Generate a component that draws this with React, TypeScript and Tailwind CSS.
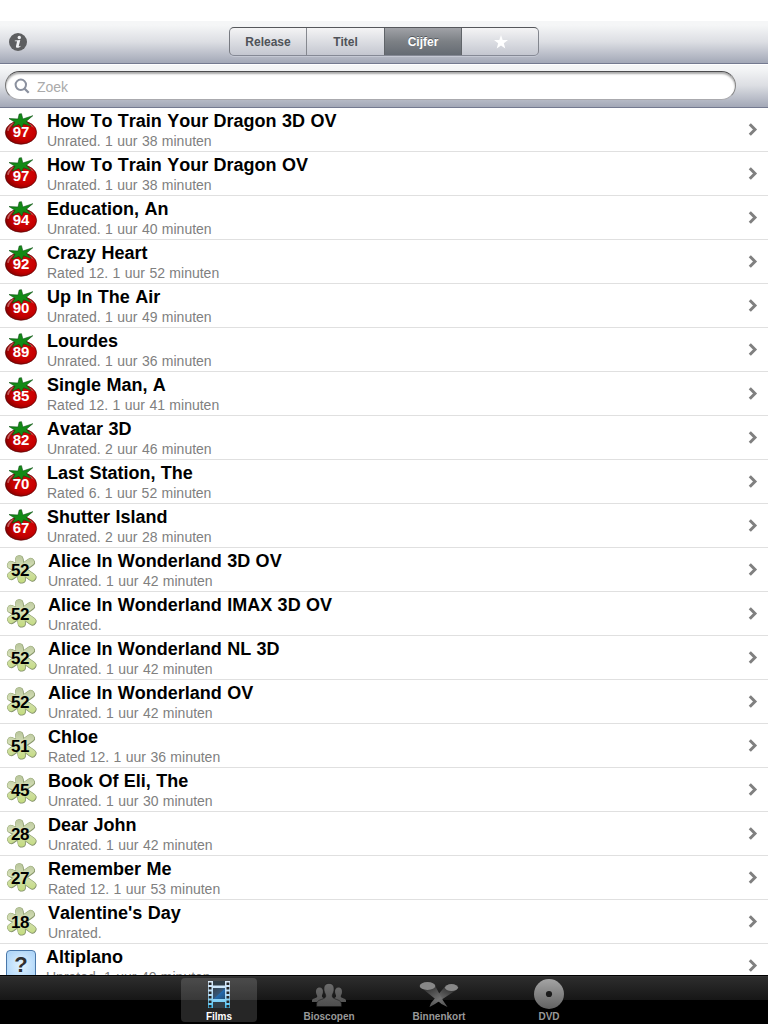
import React from "react";

type Kind = "fresh" | "rotten" | "unknown";
type Movie = { score: string; title: string; info: string; kind: Kind };

const m = (score: string, title: string, info: string, kind: Kind): Movie => ({ score, title, info, kind });

const movies: Movie[] = [
  m("97", "How To Train Your Dragon 3D OV", "Unrated. 1 uur 38 minuten", "fresh"),
  m("97", "How To Train Your Dragon OV", "Unrated. 1 uur 38 minuten", "fresh"),
  m("94", "Education, An", "Unrated. 1 uur 40 minuten", "fresh"),
  m("92", "Crazy Heart", "Rated 12. 1 uur 52 minuten", "fresh"),
  m("90", "Up In The Air", "Unrated. 1 uur 49 minuten", "fresh"),
  m("89", "Lourdes", "Unrated. 1 uur 36 minuten", "fresh"),
  m("85", "Single Man, A", "Rated 12. 1 uur 41 minuten", "fresh"),
  m("82", "Avatar 3D", "Unrated. 2 uur 46 minuten", "fresh"),
  m("70", "Last Station, The", "Rated 6. 1 uur 52 minuten", "fresh"),
  m("67", "Shutter Island", "Unrated. 2 uur 28 minuten", "fresh"),
  m("52", "Alice In Wonderland 3D OV", "Unrated. 1 uur 42 minuten", "rotten"),
  m("52", "Alice In Wonderland IMAX 3D OV", "Unrated.", "rotten"),
  m("52", "Alice In Wonderland NL 3D", "Unrated. 1 uur 42 minuten", "rotten"),
  m("52", "Alice In Wonderland OV", "Unrated. 1 uur 42 minuten", "rotten"),
  m("51", "Chloe", "Rated 12. 1 uur 36 minuten", "rotten"),
  m("45", "Book Of Eli, The", "Unrated. 1 uur 30 minuten", "rotten"),
  m("28", "Dear John", "Unrated. 1 uur 42 minuten", "rotten"),
  m("27", "Remember Me", "Rated 12. 1 uur 53 minuten", "rotten"),
  m("18", "Valentine's Day", "Unrated.", "rotten"),
  m("?", "Altiplano", "Unrated. 1 uur 40 minuten", "unknown"),
];

function Gradients() {
  return (
    <svg className="absolute h-0 w-0" aria-hidden="true">
      <defs>
        <radialGradient id="tomato" cx="0.6" cy="0.45" r="0.65">
          <stop offset="0" stopColor="#dc0808" />
          <stop offset="0.6" stopColor="#c40000" />
          <stop offset="1" stopColor="#7a0000" />
        </radialGradient>
        <linearGradient id="splat" gradientUnits="userSpaceOnUse" x1="0" y1="3" x2="0" y2="31">
          <stop offset="0" stopColor="#b7c49a" />
          <stop offset="0.45" stopColor="#d6e0b8" />
          <stop offset="1" stopColor="#c3dc7c" />
        </linearGradient>
        <linearGradient id="film" x1="0" y1="0" x2="0" y2="1">
          <stop offset="0" stopColor="#dcebfa" />
          <stop offset="0.5" stopColor="#b4dcf6" />
          <stop offset="1" stopColor="#45c0f2" />
        </linearGradient>
        <linearGradient id="frame" x1="0" y1="0" x2="1" y2="1">
          <stop offset="0" stopColor="#36424f" />
          <stop offset="0.5" stopColor="#365777" />
          <stop offset="0.55" stopColor="#226aae" />
          <stop offset="1" stopColor="#234e76" />
        </linearGradient>
        <linearGradient id="grey" gradientUnits="userSpaceOnUse" x1="0" y1="0" x2="0" y2="24">
          <stop offset="0" stopColor="#6c6c6c" />
          <stop offset="1" stopColor="#4d4d4d" />
        </linearGradient>
        <linearGradient id="disc" x1="0" y1="0" x2="0" y2="1">
          <stop offset="0" stopColor="#a4a4a4" />
          <stop offset="1" stopColor="#626262" />
        </linearGradient>
        <linearGradient id="beamLeft" x1="0" y1="0" x2="0.7" y2="1">
          <stop offset="0.1" stopColor="#2b2b2b" />
          <stop offset="0.75" stopColor="#707070" />
          <stop offset="1" stopColor="#5a5a5a" />
        </linearGradient>
        <linearGradient id="beamRight" x1="1" y1="0" x2="0.3" y2="1">
          <stop offset="0.1" stopColor="#2b2b2b" />
          <stop offset="0.75" stopColor="#707070" />
          <stop offset="1" stopColor="#5a5a5a" />
        </linearGradient>
      </defs>
    </svg>
  );
}

function Tomato() {
  return (
    <svg className="h-full w-full" viewBox="0 0 34 34">
      <ellipse cx="17" cy="20.500" rx="15.600" ry="11.700" fill="url(#tomato)" stroke="#5a0505" strokeWidth="0.7" />
      <path d="M3 18.500c.8-4 3.500-7 7.500-8-3 2.500-5 5-5.700 8.500z" fill="#fff" opacity="0.35" />
      <path d="M24 11.500c3 .5 5 2 6 4.500-2-1.500-4-2.300-6.500-2.500z" fill="#fff" opacity="0.25" />
      <path d="M15.200 2l2.300-.3L18.800 7 28.800 3.700 22.300 9.300 27 14.300 19.500 11.800 17.800 16 15 12.300 8 15.200 11 10.300 5 6.500 14 7z" fill="#138a16" stroke="#0a5010" strokeWidth="0.6" strokeLinejoin="round" />
    </svg>
  );
}

function Splat() {
  const petals = (
    <>
      <path d="M16.500 17L15.200 7.300M16.500 17L7 13M16.500 17L7.200 23.500M16.500 17L17.500 27" strokeWidth="1em" />
      <path d="M16.500 17L26.500 10M16.500 17L28 25" strokeWidth="1em" />
    </>
  );
  return (
    <svg className="h-full w-full" viewBox="0 0 34 34" fill="none" strokeLinecap="round">
      <g stroke="#7f8c66" fontSize="8" transform="translate(0.4 0.5)">{petals}</g>
      <g stroke="#9aab78" fontSize="8">{petals}</g>
      <g stroke="url(#splat)" fontSize="7">{petals}</g>
    </svg>
  );
}

function Badge({ movie }: { movie: Movie }) {
  if (movie.kind === "unknown") {
    return (
      <div className="ml-[6px] mt-[6px] flex h-[30px] w-[30px] shrink-0 items-center justify-center rounded-[4px] border border-[#4a77aa] bg-radial from-[#e2f3ff] to-[#a7d1f8] text-[22px] font-bold leading-[30px] text-[#303030] shadow-[inset_0_0_0_1px_#b6daf7]">
        {movie.score}
      </div>
    );
  }
  const fresh = movie.kind === "fresh";
  return (
    <div className="relative ml-[4px] mt-[4px] h-[34px] w-[34px] shrink-0">
      {fresh ? <Tomato /> : <Splat />}
      <span
        className={
          fresh
            ? "absolute inset-x-0 top-[10px] text-center text-[15px] font-bold leading-[20px] text-white"
            : "absolute -left-[1px] top-[8px] w-[34px] text-center text-[17px] font-bold leading-[22px] tracking-[-0.4px] text-black"
        }
      >
        {movie.score}
      </span>
    </div>
  );
}

function Row({ movie }: { movie: Movie }) {
  const indent = movie.kind === "fresh" ? "pl-[9px]" : "pl-[10px]";
  return (
    <li className="flex h-[44px] shrink-0 border-b border-[#e0e0e0]">
      <Badge movie={movie} />
      <div className={`flex min-w-0 flex-1 flex-col [font-kerning:none] ${indent}`}>
        <span className="mt-[2px] h-[22px] whitespace-nowrap text-[18px] font-bold leading-[22px] text-black [word-spacing:0.4px]">{movie.title}</span>
        <span className="h-[18px] whitespace-nowrap text-[14px] leading-[18px] text-[#808080] [word-spacing:0.5px]">{movie.info}</span>
      </div>
      <svg className="mr-[10px] mt-[15px] h-[13px] w-[10px] shrink-0" viewBox="0 0 10 13">
        <path d="M1.800 1.200l5.200 5.300L1.800 11.800" fill="none" stroke="#808080" strokeWidth="3" />
      </svg>
    </li>
  );
}

function FilmIcon() {
  const holes = [1.5, 6, 10.5, 15, 19.5, 24];
  return (
    <svg className="mt-[1px] h-[27px] w-[24px]" viewBox="0 0 24 27">
      <path d="M1 0h22v27H1z" fill="url(#film)" />
      <path d="M6 0h12v4.500H6zM6 21h12v6H6z" fill="#303d46" />
      <path d="M6 7h12v11H6z" fill="url(#frame)" />
      {holes.map((y) => (
        <path key={y} d={`M1.700 ${y}h2.800v2.400H1.700zM19.500 ${y}h2.800v2.400h-2.800z`} fill="#252525" />
      ))}
    </svg>
  );
}

function PeopleIcon() {
  return (
    <svg className="mt-[2px] h-[24px] w-[36px]" viewBox="0 0 36 24" fill="url(#grey)">
      <path d="M8.500 4.500c2.500 0 3.900 2 3.400 5-.2 1.500-1 2.500-1 3.500 0 2 3 2 4 3V19H1v-1.500c0-2.300 4.500-2 5.300-4 .1-1-1-2-1.200-3.500-.5-3.400.9-5.500 3.400-5.500z" />
      <path d="M27.500 4.500c-2.500 0-3.900 2-3.400 5 .2 1.500 1 2.500 1 3.500 0 2-3 2-4 3V19H35v-1.500c0-2.300-4.500-2-5.300-4-.1-1 1-2 1.200-3.500.5-3.400-.9-5.500-3.400-5.500z" />
      <path d="M18 .4c4 0 5.600 3 4.900 7.400-.3 2-1.700 3.500-1.700 5.200 0 3.700 8.700 3 9.200 7.500V23.500H5.600V20.500c.5-4.500 9.200-3.800 9.200-7.500 0-1.700-1.400-3.200-1.700-5.200-.7-4.400.9-7.400 4.900-7.400z" stroke="#191919" strokeWidth="0.6" />
    </svg>
  );
}

function SpotlightIcon() {
  return (
    <svg className="mt-[2px] h-[28px] w-[40px]" viewBox="0 0 40 28">
      <path d="M38 8.500L26 5.500 12 22l-1.500 4 5.500-3z" fill="url(#beamRight)" />
      <path d="M2 6.500L16 4.500l8 15 4.500 6.500-6-3z" fill="url(#beamLeft)" />
      <ellipse cx="8.500" cy="5" rx="7.800" ry="3.900" fill="#888" />
      <ellipse cx="32.500" cy="6.600" rx="6.600" ry="3.500" fill="#888" />
    </svg>
  );
}

function DiscIcon() {
  return (
    <svg className="h-[30px] w-[30px]" viewBox="0 0 30 30">
      <circle cx="15" cy="15" r="15" fill="url(#disc)" />
      <circle cx="15" cy="15" r="3.100" fill="#1b1b1b" />
    </svg>
  );
}

function Tab({ label, active, children }: { label: string; active?: boolean; children: React.ReactNode }) {
  return (
    <div className={active ? "flex h-[44px] w-[76px] flex-col items-center rounded-[4px] bg-white/15" : "flex h-[44px] w-[76px] flex-col items-center"}>
      <div className="flex h-[32px] shrink-0 items-center justify-center">{children}</div>
      <span className={active ? "mt-[1px] shrink-0 text-[10px] font-bold leading-[12px] text-white" : "mt-[1px] shrink-0 text-[10px] font-bold leading-[12px] text-[#999]"}>{label}</span>
    </div>
  );
}

export default function App() {
  return (
    <div className="flex h-[1024px] w-[768px] flex-col overflow-hidden bg-white font-['Liberation_Sans',Arial,sans-serif]">
      <Gradients />
      <div className="h-[21px] shrink-0" />
      <header className="flex h-[43px] shrink-0 items-start border-b border-[#747a90] bg-linear-to-b from-[#f5f6f7] from-10% via-[#dcdee3] via-50% to-[#a3a8b7]">
        <svg className="ml-[9px] mt-[12px] h-[18px] w-[18px]" viewBox="0 0 18 18">
          <circle cx="9" cy="9" r="9" fill="#5d5e60" />
          <circle cx="10.300" cy="4.500" r="1.700" fill="#f0f1f3" />
          <path d="M5.800 7.400l5.500-.5-1.500 5.800c-.2.900.6.700 1.600.1l.2.700c-1.700 1.500-5.100 2.200-4.600-.5l1-4.300c.1-.5-.7-.5-2.200-.5z" fill="#f0f1f3" />
        </svg>
        <div className="ml-[202px] mt-[6px] flex h-[29px] w-[310px] overflow-hidden rounded-[5px] border border-t-[#55575b] border-r-[#83868e] border-b-[#858995] border-l-[#777a81] bg-linear-to-b from-[#f4f4f5] to-[#c4c7d0] text-[12px] font-bold text-[#505358] shadow-[0_1px_0_#c5c9d4]">
          <div className="flex w-[77px] items-center justify-center border-r border-[#85888f]">Release</div>
          <div className="flex w-[77px] items-center justify-center">Titel</div>
          <div className="flex w-[78px] items-center justify-center border-x border-[#606469] bg-linear-to-b from-[#a0a2a7] via-[#7c8085] to-[#656b73] text-white [text-shadow:0_-1px_0_#54595e]">Cijfer</div>
          <div className="flex flex-1 items-center justify-center pl-[2px]">
            <svg className="h-[14px] w-[14px]" viewBox="0 0 14 14">
              <path d="M7 0l1.700 4.900 5.300.1-4.200 3.200 1.500 5.300L7 10.500l-4.300 3 1.500-5.300L0 5l5.300-.1z" fill="#fff" />
            </svg>
          </div>
        </div>
      </header>
      <div className="flex h-[44px] shrink-0 border-b border-[#747a90] bg-linear-to-b from-[#f5f6f7] from-10% via-[#dcdee3] via-50% to-[#a3a8b7] pl-[5px] pt-[7px] shadow-[inset_0_1px_0_#fff]">
        <div className="flex h-[29px] w-[731px] items-center rounded-full border border-t-[#4c4c4e] border-r-[#858585] border-b-[#aaaaae] border-l-[#777] bg-white shadow-[inset_0_2px_2px_#aaa]">
          <svg className="ml-[8px] h-[16px] w-[16px]" viewBox="0 0 16 16" fill="none" stroke="#8a909e">
            <circle cx="6.800" cy="6.800" r="5.200" strokeWidth="2" />
            <path d="M10.700 10.700l4 4" strokeWidth="2.300" />
          </svg>
          <span className="ml-[7px] pt-[2px] text-[14px] leading-[18px] text-[#aaa]">Zoek</span>
        </div>
      </div>
      <ul className="flex min-h-0 flex-1 flex-col overflow-hidden">
        {movies.map((movie) => (
          <Row key={movie.title} movie={movie} />
        ))}
      </ul>
      <nav className="flex h-[49px] shrink-0 justify-center gap-[34px] border-t border-black bg-[linear-gradient(#3b3b3b_0,#2d2d2d_1px,#161616_24px,#000_24px)] pt-[2px]">
        <Tab label="Films" active><FilmIcon /></Tab>
        <Tab label="Bioscopen"><PeopleIcon /></Tab>
        <Tab label="Binnenkort"><SpotlightIcon /></Tab>
        <Tab label="DVD"><DiscIcon /></Tab>
      </nav>
    </div>
  );
}
